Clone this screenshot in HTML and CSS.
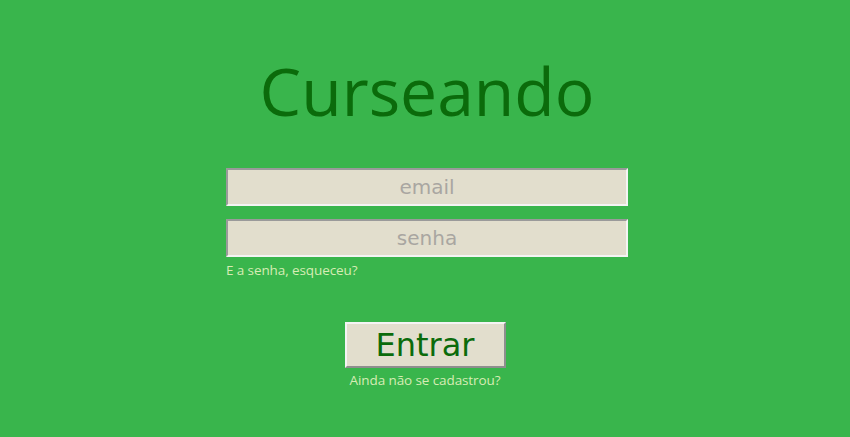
FILE: index.html
```html
<!DOCTYPE html>
<html lang="pt">
<head>
<meta charset="utf-8">
<title>Curseando</title>
<link rel="stylesheet" href="styles.css">
</head>
<body>
<main class="login">
  <h1 class="brand">Curseando</h1>
  <form class="form">
    <input class="field" type="text" placeholder="email">
    <input class="field field-pass" type="password" placeholder="senha">
    <a class="link link-left" href="#">E a senha, esqueceu?</a>
    <button class="btn" type="button">Entrar</button>
    <a class="link link-center" href="#">Ainda não se cadastrou?</a>
  </form>
</main>
</body>
</html>
```
FILE: styles.css
```css
html, body {
  margin: 0;
  padding: 0;
  background: #39b54c;
  height: 100%;
}
.login {
  display: flex;
  flex-direction: column;
  align-items: center;
  padding-top: 45px;
}
.brand {
  margin: 0 0 0 4px;
  font-family: "Open Sans", sans-serif;
  font-weight: 400;
  font-size: 66px;
  line-height: 90px;
  color: #0b6b0b;
}
.form {
  margin-top: 33px;
  width: 402px;
  display: flex;
  flex-direction: column;
  margin-left: 4px;
}
.field {
  box-sizing: border-box;
  width: 402px;
  height: 38px;
  margin: 0;
  padding: 0;
  background: #e2decd;
  border: 2px solid;
  border-color: #9a9a9a #f4f4f4 #f4f4f4 #9a9a9a;
  font-family: "DejaVu Sans", sans-serif;
  font-size: 20px;
  text-align: center;
  color: #555;
}
.field::placeholder {
  color: #a9a6a1;
}
.field-pass {
  margin-top: 13px;
}
.link {
  font-family: "Open Sans", sans-serif;
  font-size: 13.5px;
  letter-spacing: -0.1px;
  color: #d6ecb4;
  text-decoration: none;
  line-height: 18px;
}
.link-left {
  align-self: flex-start;
  margin-top: 4px;
}
.btn {
  align-self: center;
  margin-top: 43px;
  box-sizing: border-box;
  width: 161px;
  height: 46px;
  padding: 0;
  background: #e2decd;
  border: 2px solid;
  border-color: #f4f4f4 #8e8e8e #8e8e8e #f4f4f4;
  font-family: "DejaVu Sans", sans-serif;
  font-size: 32px;
  color: #0b6b0b;
  margin-left: -4px;
}
.link-center {
  align-self: center;
  margin-top: 3px;
  margin-left: -4px;
}
```
